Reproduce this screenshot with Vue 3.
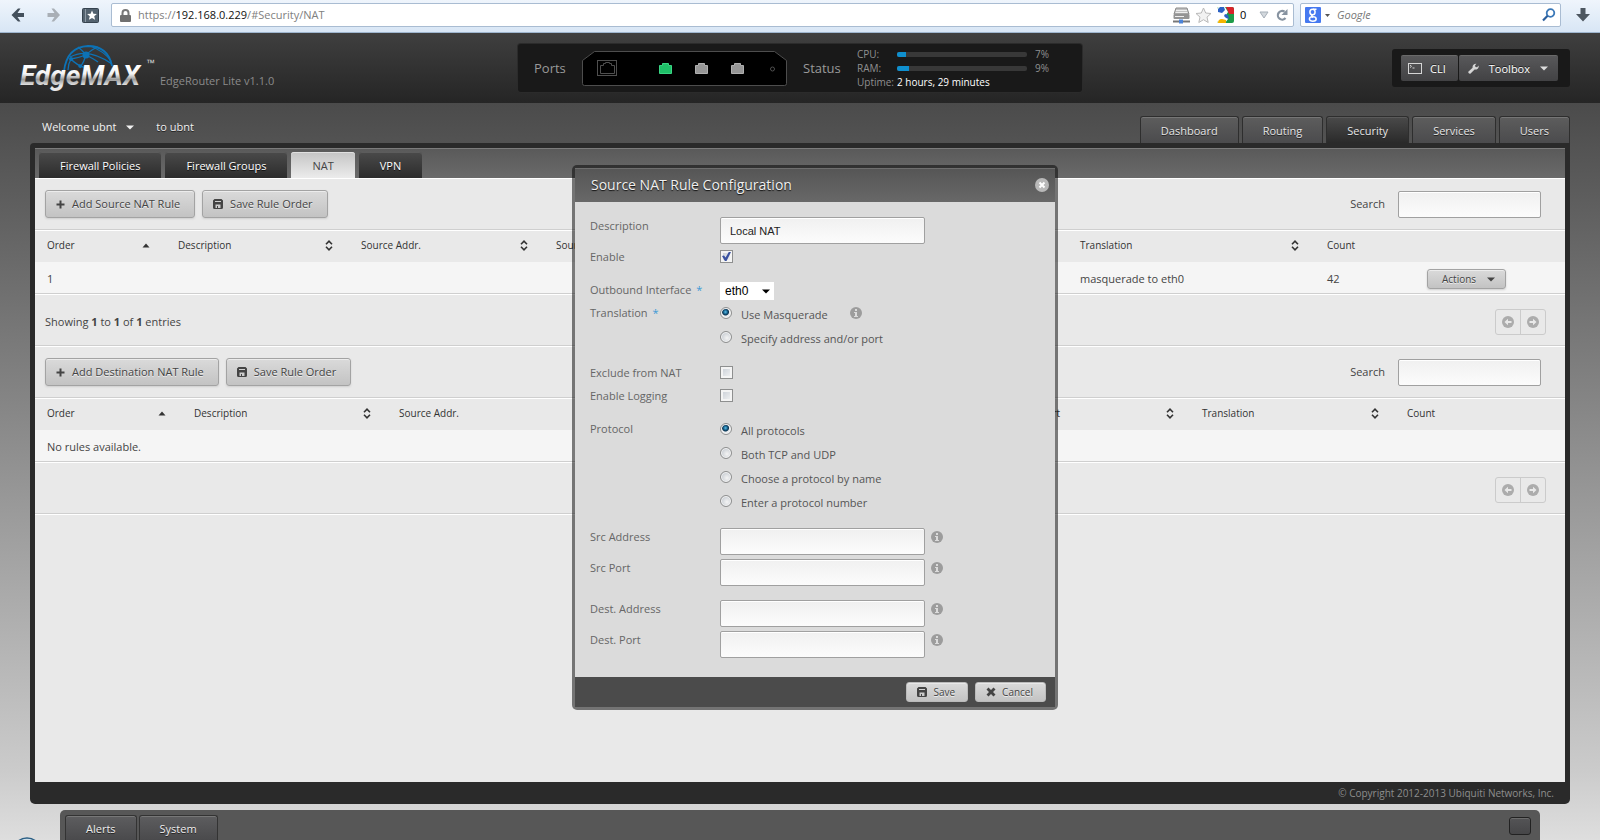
<script setup>
import { ref } from 'vue'

const mainTabs = ['Dashboard', 'Routing', 'Security', 'Services', 'Users']
const subTabs = ['Firewall Policies', 'Firewall Groups', 'NAT', 'VPN']
const headers = ['Order', 'Description', 'Source Addr.', 'Source Port', 'Dest. Addr.', 'Dest. Port', 'Translation', 'Count']

const sections = [
  {
    id: 'source',
    add: 'Add Source NAT Rule',
    rows: [{ order: '1', translation: 'masquerade to eth0', count: '42' }],
    summary: true,
  },
  { id: 'destination', add: 'Add Destination NAT Rule', rows: [], summary: false },
]

const loads = [
  { name: 'CPU', value: 7 },
  { name: 'RAM', value: 9 },
]

const description = ref('Local NAT')
const enabled = ref(true)
const outbound = ref('eth0')
const translation = ref('masquerade')
const exclude = ref(false)
const logging = ref(false)
const protocol = ref('all')

const protocols = [
  { value: 'all', label: 'All protocols' },
  { value: 'both', label: 'Both TCP and UDP' },
  { value: 'name', label: 'Choose a protocol by name' },
  { value: 'number', label: 'Enter a protocol number' },
]

const addressGroups = [
  [{ id: 'src-address', label: 'Src Address' }, { id: 'src-port', label: 'Src Port' }],
  [{ id: 'dest-address', label: 'Dest. Address' }, { id: 'dest-port', label: 'Dest. Port' }],
]
</script>

<template>
  <div class="page">
    <svg class="defs" width="0" height="0" aria-hidden="true">
      <defs>
        <symbol id="i-plus" viewBox="0 0 9 9"><path d="M3.5 0.5h2v3h3v2h-3v3h-2v-3h-3v-2h3z" /></symbol>
        <symbol id="i-save" viewBox="0 0 10 10">
          <path fill-rule="evenodd" d="M1.500 0h7L10 1.500v7A1.500 1.500 0 0 1 8.500 10h-7A1.500 1.500 0 0 1 0 8.500v-7zM2 2v1h6V2zM2.500 5.500V9H4V7h1v2h2.500V5.500z" />
        </symbol>
        <symbol id="i-cross" viewBox="0 0 10 10"><path d="M2.500 0.500 5 3 7.500 0.500 9.500 2.500 7 5l2.500 2.500-2 2L5 7 2.500 9.500l-2-2L3 5 0.500 2.500z" /></symbol>
        <symbol id="i-info" viewBox="0 0 12 12">
          <circle cx="6" cy="6" r="6" />
          <path fill="#dbdbdb" d="M5 2h2v2H5zM4 5h3v4h1v1H4V9h1V6H4z" />
        </symbol>
        <symbol id="i-down" viewBox="0 0 8 5"><path d="M0 0.500h8L4 4.500z" /></symbol>
        <symbol id="i-sort" viewBox="0 0 8 11">
          <path fill="none" stroke="currentColor" stroke-width="1.600" d="M1 4.200 4 1.200l3 3M1 6.800l3 3 3-3" />
        </symbol>
        <symbol id="i-up" viewBox="0 0 8 5"><path d="M0.500 4.500 4 0.500l3.500 4z" /></symbol>
        <symbol id="i-prev" viewBox="0 0 12 12">
          <circle cx="6" cy="6" r="6" />
          <path fill="#e9e9e9" d="M2.500 6 6 2.800V5h3.500v2H6v2.200z" />
        </symbol>
        <symbol id="i-next" viewBox="0 0 12 12">
          <circle cx="6" cy="6" r="6" />
          <path fill="#e9e9e9" d="M9.500 6 6 2.800V5H2.500v2H6v2.200z" />
        </symbol>
      </defs>
    </svg>

    <div class="browser">
      <button class="tool back" type="button" aria-label="Back">
        <svg width="14" height="14" viewBox="0 0 14 14"><path fill="#44505c" d="M0.500 7 7 0.500h2.500L6.500 5H13v4H6.500l3 4.500H7z" /></svg>
      </button>
      <button class="tool forward" type="button" aria-label="Forward">
        <svg width="14" height="14" viewBox="0 0 14 14"><path fill="#a9afb6" d="M13 7 7 0.500H4.500L7.500 5H0.500v4h7l-3 4.500H7z" /></svg>
      </button>
      <button class="tool marks" type="button" aria-label="Bookmarks">
        <svg width="17" height="15" viewBox="0 0 17 15">
          <rect x="0.500" y="0.500" width="16" height="14" rx="1" fill="#53626f" stroke="#36434f" />
          <path stroke="#8d99a4" d="M3.500 1v13" />
          <path fill="#fff" d="m10 2.500 1.400 3.200 3.500.3-2.700 2.300.9 3.400-3.100-1.800-3.100 1.800.9-3.400L5.100 6l3.500-.3z" />
        </svg>
      </button>
      <div class="urlbar">
        <svg class="lock" width="11" height="13" viewBox="0 0 11 13">
          <path fill="none" stroke="#777" stroke-width="2" d="M2.500 7V4a3 3 0 0 1 6 0v3" />
          <rect y="6" width="11" height="7" rx="1" fill="#6f6f6f" />
        </svg>
        <div class="url" role="textbox" aria-label="Address" contenteditable="true" spellcheck="false">https://<b>192.168.0.229</b>/#Security/NAT</div>
        <svg class="addon" width="17" height="17" viewBox="0 0 17 17">
          <path fill="#c2c2c2" stroke="#8b8b8b" d="M3 1h11l2 6H1z" />
          <rect x="0.500" y="7" width="16" height="5" rx="1" fill="#949494" />
          <path stroke="#eee" d="M3 3.500h11M2.500 5.500h12M2 9.500h9" />
          <path stroke="#777" stroke-width="2" d="M0 14.500h17" />
          <rect x="6" y="12.500" width="4" height="4" fill="#4b83d8" />
        </svg>
        <svg class="addon" width="17" height="17" viewBox="0 0 17 17">
          <path fill="#f2f2f2" stroke="#b9b9b9" d="m8.500 1 2.200 5 5.300.5-4 3.600 1.200 5.400-4.700-2.800-4.700 2.800L5 10.100 1 6.500 6.300 6z" />
        </svg>
        <svg class="addon" width="17" height="16" viewBox="0 0 17 16">
          <rect width="17" height="16" rx="2" fill="#1d9b48" />
          <path fill="#d8232a" d="M9 0h6a2 2 0 0 1 2 2v5h-5z" />
          <path fill="#fff" d="M2 0h6l3 5-2 3 2 4-3 4H2a2 2 0 0 1-2-2V2a2 2 0 0 1 2-2z" />
          <path fill="#2b62c4" d="M3 0h4l1 3-3 3-4-1V2zM8 7l3 1 1 4-3-1-2-2z" />
          <path fill="#f4b400" d="M1 16q0-4 4-4l4 1 0 3z" />
        </svg>
        <span class="rank">0</span>
        <button class="mini drop" type="button" aria-label="History">
          <svg width="10" height="8" viewBox="0 0 10 8"><path fill="#d3d8dd" stroke="#a6afb8" d="M1 1h8L5 7z" /></svg>
        </button>
        <button class="mini" type="button" aria-label="Reload">
          <svg width="12" height="12" viewBox="0 0 12 12">
            <path fill="none" stroke="#8793a0" stroke-width="2.200" d="M9.500 9A4.300 4.300 0 1 1 8.600 2.700" />
            <path fill="#8793a0" d="M11.500 0v6h-6z" />
          </svg>
        </button>
      </div>
      <div class="websearch">
        <button class="mini engine" type="button" aria-label="Search engine">
          <svg width="25" height="16" viewBox="0 0 25 16">
            <rect width="16" height="16" rx="1" fill="#4679f0" />
            <g fill="none" stroke="#fff" stroke-width="1.500">
              <ellipse cx="7.500" cy="5" rx="2.600" ry="2.800" />
              <path d="M8 2.200h3.500M8 7.800q-3 1 0 2.400" />
              <ellipse cx="7.800" cy="12" rx="3.400" ry="2.200" />
            </g>
            <path fill="#555" d="M20 7h5l-2.500 3z" />
          </svg>
        </button>
        <input class="webinput" type="text" placeholder="Google" aria-label="Web search" />
        <button class="mini" type="button" aria-label="Search">
          <svg width="14" height="14" viewBox="0 0 14 14">
            <circle cx="8.500" cy="5" r="3.800" fill="none" stroke="#3a78b8" stroke-width="1.800" />
            <path stroke="#2c5f9c" stroke-width="2.200" d="M5.600 7.800 1 12.500" />
          </svg>
        </button>
      </div>
      <button class="tool download" type="button" aria-label="Downloads">
        <svg width="14" height="14" viewBox="0 0 14 14"><path fill="#4d5760" d="M4.500 0h5v6H14l-7 7.500L0 6h4.500z" /></svg>
      </button>
    </div>

    <header class="header">
      <div class="brand">
        <svg class="logo" width="136" height="54" viewBox="0 0 136 54" role="img" aria-label="EdgeMAX">
          <defs>
            <linearGradient id="chrome" x1="0" y1="0" x2="0" y2="1">
              <stop offset="0.200" stop-color="#ffffff" />
              <stop offset="0.450" stop-color="#f4f4f4" />
              <stop offset="0.620" stop-color="#9a9a9a" />
              <stop offset="0.800" stop-color="#e6e6e6" />
            </linearGradient>
          </defs>
          <g fill="none" stroke="#0d72b5" stroke-width="1.300">
            <path d="M44 27Q47 3 68 2 88 2 92 22" stroke-width="1.800" />
            <path d="M50 13Q68 3 92 20M58 3Q62 6 66 11M66 11Q58 14 51 15M66 11Q64 18 60 24M66 11Q72 5 78 3M51 15Q56 21 66 24M51 15Q48 20 48 26M66 11Q74 15 78 18" />
            <path d="M70 2Q84 7 91 17" />
          </g>
          <circle cx="66" cy="11" r="3.500" fill="#0d72b5" />
          <circle cx="51" cy="15" r="2" fill="#0d72b5" />
          <circle cx="60" cy="22" r="1.800" fill="#0d72b5" />
          <text class="logo-text" x="0" y="41" fill="url(#chrome)">EdgeMAX</text>
          <text class="logo-tm" x="126" y="22" fill="#ddd">™</text>
        </svg>
        <span class="model">EdgeRouter Lite v1.1.0</span>
      </div>

      <div class="monitor">
        <span class="caption">Ports</span>
        <svg class="device" width="205" height="35" viewBox="0 0 205 35" role="img" aria-label="Device ports">
          <path fill="#000" stroke="#4d4d4d" d="M0.500 9.500 12.500 0.500h180l12 9v23a2 2 0 0 1-2 2h-200a2 2 0 0 1-2-2z" />
          <g fill="none" stroke="#4f4f4f">
            <rect x="15.500" y="9.500" width="19" height="15" />
            <path d="M18.500 14.500h3v-2h2v-1h4v1h2v2h3v8h-14z" />
          </g>
          <g transform="translate(77 12)"><path fill="#1fbf68" stroke="#3ad584" d="M0.500 2.500h3v-2h6v2h3v8H0.500z" /></g>
          <g transform="translate(113 12)"><path fill="#969696" stroke="#b0b0b0" d="M0.500 2.500h3v-2h6v2h3v8H0.500z" /></g>
          <g transform="translate(149 12)"><path fill="#969696" stroke="#b0b0b0" d="M0.500 2.500h3v-2h6v2h3v8H0.500z" /></g>
          <circle cx="190.500" cy="18" r="2" fill="none" stroke="#4f4f4f" />
        </svg>
        <span class="caption">Status</span>
        <div class="stats">
          <div v-for="l in loads" :key="l.name" class="stat">
            <span class="key">{{ l.name }}:</span>
            <span class="meter"><span class="fill" :style="{ width: l.value + '%' }"></span></span>
            <span class="pct">{{ l.value }}%</span>
          </div>
          <div class="stat uptime">Uptime: <span class="time">2 hours, 29 minutes</span></div>
        </div>
      </div>

      <div class="toolbox">
        <button class="dark" type="button">
          <svg width="14" height="11" viewBox="0 0 14 11">
            <rect x="0.500" y="0.500" width="13" height="10" fill="none" stroke="#d5d5d5" />
            <path fill="none" stroke="#d5d5d5" d="m2 2 1.500 1.300L2 4.600M4.500 5h2" />
          </svg>
          CLI
        </button>
        <button class="dark" type="button">
          <svg width="11" height="11" viewBox="0 0 11 11">
            <path fill="#d5d5d5" d="M0.500 8.600 4.600 4.800C4.200 2.500 5.800 0.600 8.400 0.800L7 2.500l.5 1.500 1.600.3L10.600 2.600C11.200 5 9 7 6.600 6.500L2.600 10.500C1.400 11.300-.3 9.800.5 8.600z" />
          </svg>
          Toolbox
          <svg class="caret" width="8" height="5"><use href="#i-down" /></svg>
        </button>
      </div>
    </header>

    <div class="navrow">
      <div class="welcome">
        <button class="user" type="button">Welcome ubnt <svg width="8" height="5"><use href="#i-down" /></svg></button>
        <span>to ubnt</span>
      </div>
      <nav class="tabs">
        <a v-for="t in mainTabs" :key="t" href="#" class="tab" :class="{ active: t === 'Security' }">{{ t }}</a>
      </nav>
    </div>

    <main class="panel">
      <nav class="subtabs">
        <a v-for="t in subTabs" :key="t" href="#" class="subtab" :class="{ active: t === 'NAT' }">{{ t }}</a>
      </nav>
      <div class="content">
        <section v-for="s in sections" :key="s.id" :class="s.id">
          <div class="toolbar">
            <button class="btn" type="button"><svg width="9" height="9"><use href="#i-plus" /></svg>{{ s.add }}</button>
            <button class="btn" type="button"><svg width="10" height="10"><use href="#i-save" /></svg>Save Rule Order</button>
            <label class="search">Search <input class="field" type="text" /></label>
          </div>
          <table class="rules">
            <colgroup>
              <col class="c-order" /><col class="c-desc" /><col class="c-src" /><col /><col />
              <col class="c-dport" /><col class="c-trans" /><col class="c-count" /><col class="c-act" />
            </colgroup>
            <thead>
              <tr>
                <th v-for="h in headers" :key="h" scope="col">
                  <span class="th">
                    {{ h }}
                    <svg v-if="h === 'Order'" width="8" height="5"><use href="#i-up" /></svg>
                    <svg v-else-if="h !== 'Count'" width="8" height="11"><use href="#i-sort" /></svg>
                  </span>
                </th>
                <th></th>
              </tr>
            </thead>
            <tbody>
              <tr v-for="r in s.rows" :key="r.order">
                <td>{{ r.order }}</td>
                <td></td><td></td><td></td><td></td><td></td>
                <td>{{ r.translation }}</td>
                <td>{{ r.count }}</td>
                <td>
                  <button class="btn small" type="button">Actions <svg width="8" height="5"><use href="#i-down" /></svg></button>
                </td>
              </tr>
              <tr v-if="!s.rows.length"><td colspan="9">No rules available.</td></tr>
            </tbody>
          </table>
          <div class="pagerow">
            <span v-if="s.summary">Showing <b>1</b> to <b>1</b> of <b>1</b> entries</span>
            <div class="pager">
              <button type="button" aria-label="Previous page"><svg width="12" height="12"><use href="#i-prev" /></svg></button>
              <button type="button" aria-label="Next page"><svg width="12" height="12"><use href="#i-next" /></svg></button>
            </div>
          </div>
        </section>
      </div>
      <footer class="copyright">© Copyright 2012-2013 Ubiquiti Networks, Inc.</footer>
    </main>

    <div class="dock">
      <button class="docktab" type="button">Alerts</button>
      <button class="docktab" type="button">System</button>
      <button class="dockbtn" type="button" aria-label="Toggle panel"></button>
    </div>
    <svg class="orb" width="30" height="30" viewBox="0 0 30 30" aria-hidden="true">
      <circle cx="15" cy="15" r="14" fill="#cfe0ea" stroke="#2b5f85" stroke-width="1.500" />
    </svg>

    <form class="dialog" role="dialog" aria-labelledby="dialog-title" @submit.prevent>
      <div class="dialog-head">
        <h2 id="dialog-title">Source NAT Rule Configuration</h2>
        <button class="close" type="button" aria-label="Close">
          <svg width="14" height="14" viewBox="0 0 14 14">
            <circle cx="7" cy="7" r="7" fill="#b9b9b9" />
            <path stroke="#fff" stroke-width="2" d="m4.500 4.500 5 5m0-5-5 5" />
          </svg>
        </button>
      </div>

      <div class="dialog-body">
        <div class="group">
          <div class="row">
            <label for="description">Description</label>
            <input id="description" v-model="description" class="field" type="text" />
          </div>
          <div class="row">
            <label for="enable">Enable</label>
            <input id="enable" v-model="enabled" class="check" type="checkbox" />
          </div>
        </div>

        <div class="group">
          <div class="row">
            <label for="outbound">Outbound Interface <span class="req">*</span></label>
            <span class="select">
              <select id="outbound" v-model="outbound"><option>eth0</option><option>eth1</option><option>eth2</option></select>
              <svg width="8" height="5"><use href="#i-down" /></svg>
            </span>
          </div>
          <div class="row">
            <span id="translation" class="name">Translation <span class="req">*</span></span>
            <div class="options" role="radiogroup" aria-labelledby="translation">
              <div class="option">
                <label><input v-model="translation" type="radio" name="translation" value="masquerade" />Use Masquerade</label>
                <svg class="info after-option" width="12" height="12"><use href="#i-info" /></svg>
              </div>
              <div class="option">
                <label><input v-model="translation" type="radio" name="translation" value="address" />Specify address and/or port</label>
              </div>
            </div>
          </div>
        </div>

        <div class="group">
          <div class="row">
            <label for="exclude">Exclude from NAT</label>
            <input id="exclude" v-model="exclude" class="check" type="checkbox" />
          </div>
          <div class="row">
            <label for="logging">Enable Logging</label>
            <input id="logging" v-model="logging" class="check" type="checkbox" />
          </div>
        </div>

        <div class="group">
          <div class="row">
            <span id="protocol" class="name">Protocol</span>
            <div class="options" role="radiogroup" aria-labelledby="protocol">
              <div v-for="p in protocols" :key="p.value" class="option">
                <label><input v-model="protocol" type="radio" name="protocol" :value="p.value" />{{ p.label }}</label>
              </div>
            </div>
          </div>
        </div>

        <div v-for="(g, i) in addressGroups" :key="i" class="group">
          <div v-for="f in g" :key="f.id" class="row">
            <label :for="f.id">{{ f.label }}</label>
            <input :id="f.id" class="field" type="text" />
            <svg class="info" width="12" height="12"><use href="#i-info" /></svg>
          </div>
        </div>
      </div>

      <div class="dialog-foot">
        <button class="btn small" type="submit"><svg width="10" height="10"><use href="#i-save" /></svg>Save</button>
        <button class="btn small" type="button"><svg width="10" height="10"><use href="#i-cross" /></svg>Cancel</button>
      </div>
    </form>
  </div>
</template>

<style>
html,
body {
  margin: 0;
  overflow: hidden;
}
</style>

<style scoped>
.page {
  position: relative;
  box-sizing: border-box;
  display: flex;
  flex-direction: column;
  min-height: 100vh;
  overflow: hidden;
  font-family: "Open Sans", "Noto Sans", sans-serif;
  font-size: 11px;
  line-height: 18px;
  color: #444;
  background: linear-gradient(#4b4b4b 103px, #5a5a5a 180px, #7b7b7b 350px, #9c9c9c 520px, #cbcbcb 770px, #dedede 840px);
}
.page *,
.page *::before,
.page *::after {
  box-sizing: border-box;
}
.defs {
  position: absolute;
}
svg {
  flex: none;
  fill: currentColor;
}
button,
input,
select {
  font: inherit;
  color: inherit;
  margin: 0;
}
button {
  cursor: pointer;
}
a {
  color: inherit;
  text-decoration: none;
}

/* browser chrome */
.browser {
  display: flex;
  align-items: center;
  height: 33px;
  padding: 0 8px 2px 9px;
  border-bottom: 1px solid #9fb6cf;
  background: linear-gradient(#eff5fc, #d8e6f5);
}
.tool,
.mini {
  display: flex;
  align-items: center;
  justify-content: center;
  padding: 0;
  border: 0;
  background: none;
}
.tool {
  width: 18px;
  height: 24px;
}
.forward {
  margin-left: 18px;
}
.marks {
  margin: 0 12px 0 18px;
}
.urlbar,
.websearch {
  display: flex;
  align-items: center;
  height: 24px;
  border: 1px solid #a9bcd2;
  border-radius: 2px;
  background: #fff;
}
.urlbar {
  flex: 1;
  padding: 0 5px 0 8px;
}
.url {
  flex: 1;
  margin-left: 7px;
  color: #808080;
  outline: 0;
}
.url b {
  font-weight: 400;
  color: #111;
}
.addon {
  margin-left: 5px;
}
.rank {
  width: 19px;
  margin-left: 6px;
  color: #000;
}
.drop {
  margin-right: 7px;
}
.websearch {
  width: 261px;
  margin: 0 13px 0 6px;
  padding: 0 4px;
}
.webinput {
  flex: 1;
  min-width: 0;
  margin-left: 7px;
  padding: 0;
  border: 0;
  outline: 0;
  background: none;
}
.webinput::placeholder {
  color: #777;
  font-style: italic;
}

/* header */
.header {
  position: relative;
  display: flex;
  align-items: flex-start;
  justify-content: space-between;
  height: 70px;
  padding: 11px 30px 0 20px;
  background: linear-gradient(#3f3f3f, #252525);
}
.brand {
  display: flex;
  width: 498px;
}
.logo {
  overflow: visible;
}
.logo-text {
  font: italic 700 28px Roboto, "Liberation Sans", sans-serif;
}
.logo-tm {
  font: 9px "Liberation Sans", sans-serif;
}
.model {
  margin: 28px 0 0 4px;
  color: #8b8b8b;
}
.monitor {
  display: flex;
  align-items: center;
  width: 564px;
  height: 48px;
  margin-right: auto;
  padding: 0 16px;
  border-radius: 3px;
  background: #191919;
  box-shadow: 0 0 0 1px #2b2b2b;
}
.caption {
  width: 48px;
  color: #9a9a9a;
  font-size: 13px;
}
.device {
  margin-right: 16px;
}
.stats {
  margin-left: 6px;
  color: #909090;
  font-size: 10px;
  line-height: 14px;
}
.stat {
  display: flex;
  align-items: center;
  height: 14px;
}
.key {
  width: 40px;
}
.meter {
  width: 130px;
  height: 5px;
  margin-right: 8px;
  border-radius: 2px;
  background: #383838;
  overflow: hidden;
}
.fill {
  display: block;
  height: 100%;
  background: #0f8fce;
}
.uptime {
  gap: 3px;
}
.time {
  color: #fff;
}
.toolbox {
  display: flex;
  gap: 1px;
  margin-top: 5px;
  padding: 6px 12px 6px 9px;
  border-radius: 3px;
  background: #191919;
}
.dark {
  display: flex;
  align-items: center;
  gap: 8px;
  height: 26px;
  padding: 0 12px 0 7px;
  border: 0;
  border-top: 1px solid #6a6a6a;
  border-radius: 2px;
  background: linear-gradient(#58585a, #424244);
  color: #fff;
  text-shadow: 0 -1px 0 #222;
}
.dark:last-child {
  gap: 10px;
  padding: 0 10px 0 9px;
}
.caret {
  color: #ddd;
}

/* navigation */
.navrow {
  display: flex;
  align-items: flex-end;
  justify-content: space-between;
  height: 40px;
  padding: 0 30px 0 42px;
  color: #f2f2f2;
  text-shadow: 0 1px 0 #222;
}
.welcome {
  display: flex;
  gap: 22px;
  padding-bottom: 7px;
}
.user {
  display: flex;
  align-items: center;
  gap: 10px;
  padding: 0;
  border: 0;
  background: none;
}
.tabs {
  display: flex;
  gap: 3px;
}
.tab {
  height: 27px;
  padding: 5px 20px 0;
  border: 1px solid #2e2e2e;
  border-bottom: 0;
  border-radius: 3px 3px 0 0;
  background: linear-gradient(#5d5d5d, #4b4b4d);
  box-shadow: inset 0 1px 0 #767676;
  color: #e6e6e6;
}
.tab.active {
  background: linear-gradient(#4a4a4a, #2a2a2a);
  box-shadow: inset 0 1px 0 #5a5a5a;
}

/* panel */
.panel {
  flex: 1;
  display: flex;
  flex-direction: column;
  margin: 0 30px;
  padding: 5px 5px 0;
  border-radius: 4px 0 5px 5px;
  background: #2a2a2a;
}
.subtabs {
  display: flex;
  gap: 4px;
  height: 30px;
  padding: 3px 4px 0;
  border-top: 1px solid #7c7c7c;
  background: linear-gradient(#5a5a5a, #6a6a6a);
  color: #fff;
  text-shadow: 0 1px 0 #111;
}
.subtab {
  height: 26px;
  padding: 5px 21px 0;
  border-radius: 3px 3px 0 0;
  background: linear-gradient(#4a4a4a, #2c2c2c);
  box-shadow: inset 0 1px 0 #5c5c5c;
}
.subtab.active {
  background: linear-gradient(#c4c4c4, #ececec);
  box-shadow: inset 0 1px 0 #e0e0e0;
  color: #444;
  text-shadow: none;
}
.content {
  flex: 1;
  border-top: 1px solid #fff;
  background: #e9e9e9;
}
.toolbar,
.pagerow {
  display: flex;
  align-items: center;
  height: 52px;
  border-bottom: 1px solid #fff;
  box-shadow: inset 0 -1px 0 #cfcfcf;
}
.toolbar {
  gap: 7px;
  padding: 0 24px 1px 10px;
}
.pagerow {
  justify-content: space-between;
  padding: 2px 19px 0 10px;
}
.btn {
  display: flex;
  align-items: center;
  gap: 7px;
  height: 28px;
  padding: 0 14px 0 10px;
  border: 1px solid #a3a3a3;
  border-radius: 3px;
  background: linear-gradient(#dadada, #c3c3c3);
  box-shadow: inset 0 1px 0 #ececec, 0 1px 2px #cfcfcf;
  text-shadow: 0 1px 0 #eee;
}
.btn.small {
  gap: 6px;
  height: 20px;
  padding: 0 12px 0 10px;
  font-size: 10px;
}
.search {
  display: flex;
  align-items: center;
  gap: 13px;
  margin-left: auto;
}
.field {
  width: 205px;
  height: 27px;
  padding: 0 9px;
  border: 1px solid #a0a0a0;
  border-radius: 2px;
  outline: 0;
  background: linear-gradient(#f0f0f0, #fcfcfc);
  box-shadow: inset 0 1px 0 #fff;
  color: #222;
  font-family: "Liberation Sans", Arial, sans-serif;
}
.search .field {
  width: 143px;
}
.rules {
  width: 100%;
  border-collapse: separate;
  border-spacing: 0;
  table-layout: fixed;
}
.rules th,
.rules td {
  padding: 0 0 0 12px;
  text-align: left;
  font-weight: 400;
}
.rules th {
  height: 31px;
  padding-bottom: 3px;
  font-size: 10px;
}
.rules td {
  height: 33px;
  padding-top: 2px;
  border-bottom: 1px solid #fff;
  background: #f5f5f5;
  box-shadow: inset 0 -1px 0 #cfcfcf;
}
.th {
  display: flex;
  align-items: center;
  justify-content: space-between;
  padding-right: 16px;
  color: #333;
}
.c-order {
  width: 131px;
}
.c-desc {
  width: 183px;
}
.c-src {
  width: 195px;
}
.c-dport {
  width: 174px;
}
.c-trans {
  width: 247px;
}
.c-count {
  width: 100px;
}
.c-act {
  width: 150px;
}
.destination .c-order {
  width: 147px;
}
.destination .c-desc,
.destination .c-trans {
  width: 205px;
}
.destination .c-src {
  width: 220px;
}
.destination .c-dport {
  width: 188px;
}
.destination .c-act {
  width: 70px;
}
.rules .small {
  gap: 11px;
  padding: 0 10px 0 14px;
}
.pager {
  display: flex;
  margin-left: auto;
  border: 1px solid #cbcbcb;
  border-radius: 3px;
}
.pager button {
  display: flex;
  align-items: center;
  justify-content: center;
  width: 24px;
  height: 24px;
  padding: 0;
  border: 0;
  background: none;
  color: #acacac;
}
.pager button + button {
  width: 25px;
  border-left: 1px solid #cbcbcb;
}
.copyright {
  height: 22px;
  padding-right: 11px;
  color: #8e8e8e;
  font-size: 10px;
  line-height: 22px;
  text-align: right;
}

/* dock */
.dock {
  display: flex;
  gap: 2px;
  height: 30px;
  margin: 6px 60px 0;
  padding: 5px 9px 0 5px;
  border-radius: 5px 5px 0 0;
  background: #575757;
}
.docktab {
  padding: 2px 20px 0;
  border: 1px solid #333;
  border-bottom: 0;
  border-radius: 3px 3px 0 0;
  background: linear-gradient(#5d5d5f, #4a4a4c);
  box-shadow: inset 0 1px 0 #777;
  color: #eee;
  text-shadow: 0 1px 0 #222;
}
.dockbtn {
  width: 22px;
  height: 18px;
  margin: 2px 0 0 auto;
  padding: 0;
  border: 1px solid #222;
  border-radius: 3px;
  background: linear-gradient(#545456, #464648);
  box-shadow: inset 0 1px 0 #6c6c6c;
}
.orb {
  position: absolute;
  left: 12px;
  bottom: -27px;
}

/* dialog */
.dialog {
  position: absolute;
  top: 165px;
  left: calc(50% - 228px);
  width: 486px;
  border: 3px solid rgba(0, 0, 0, 0.5);
  border-radius: 5px;
  background: #dbdbdb;
  background-clip: padding-box;
  color: #666;
}
.dialog-head {
  display: flex;
  align-items: center;
  justify-content: space-between;
  height: 34px;
  padding: 0 6px 2px 16px;
  border-top: 1px solid #6e6e6e;
  background: linear-gradient(#565656, #686868);
}
.dialog-head h2 {
  margin: 0;
  color: #f0f0f0;
  font-size: 14px;
  font-weight: 400;
  text-shadow: 0 1px 1px #111;
}
.close {
  display: flex;
  padding: 0;
  border: 0;
  background: none;
}
.dialog-body {
  display: flex;
  flex-direction: column;
  gap: 14px;
  padding: 15px 15px 19px;
}
.group {
  display: flex;
  flex-direction: column;
  gap: 4px;
}
.row {
  display: flex;
  align-items: flex-start;
  min-height: 19px;
}
.row > label,
.name {
  width: 130px;
}
.req {
  margin-left: 2px;
  color: #3d9ad6;
}
.check {
  position: relative;
  width: 13px;
  height: 13px;
  margin-top: 2px;
  appearance: none;
  border: 1px solid #8e8f8f;
  background: linear-gradient(135deg, #c6ccd4, #f6f6f6);
  box-shadow: inset 0 0 0 2px #f4f4f4;
}
.check:checked::after {
  content: "";
  position: absolute;
  inset: 1px;
  background: #3b52a0;
  clip-path: polygon(0 45%, 22% 38%, 40% 62%, 75% 0, 100% 0, 50% 100%, 32% 100%);
}
.select {
  position: relative;
  display: flex;
  align-items: center;
  margin-top: 1px;
  color: #000;
}
.select select {
  width: 54px;
  height: 18px;
  padding: 0 5px;
  appearance: none;
  border: 0;
  border-radius: 0;
  background: #fff;
  font-family: "Liberation Sans", Arial, sans-serif;
  font-size: 12px;
}
.select svg {
  position: absolute;
  right: 4px;
  pointer-events: none;
}
.option {
  height: 24px;
  padding-top: 2px;
}
.option:last-child {
  height: 22px;
}
.option,
.option label {
  display: flex;
  align-items: center;
  color: #555;
}
.option {
  align-items: flex-start;
}
.option input {
  width: 12px;
  height: 12px;
  margin: 0 9px 4px 0;
  appearance: none;
  border: 1px solid #8e8f8f;
  border-radius: 50%;
  background: radial-gradient(circle at 60% 60%, #f4f4f4, #c9ced4 70%);
  box-shadow: inset 0 0 0 1px #f4f4f4;
}
.option input:checked {
  background: radial-gradient(circle at 45% 40%, #5cc0ea 0, #17618c 2px, #0b3350 3px, #e8ebee 4px);
}
.info {
  margin: 3px 0 0 6px;
  color: #9c9c9c;
}
.after-option {
  margin: 1px 0 0 22px;
}
.dialog-foot {
  display: flex;
  align-items: center;
  justify-content: flex-end;
  gap: 7px;
  height: 30px;
  padding: 0 9px;
  background: #4b4b4b;
  color: #444;
}
.dialog-foot .btn {
  border-color: #bbb;
  box-shadow: inset 0 1px 0 #e8e8e8;
}
</style>
